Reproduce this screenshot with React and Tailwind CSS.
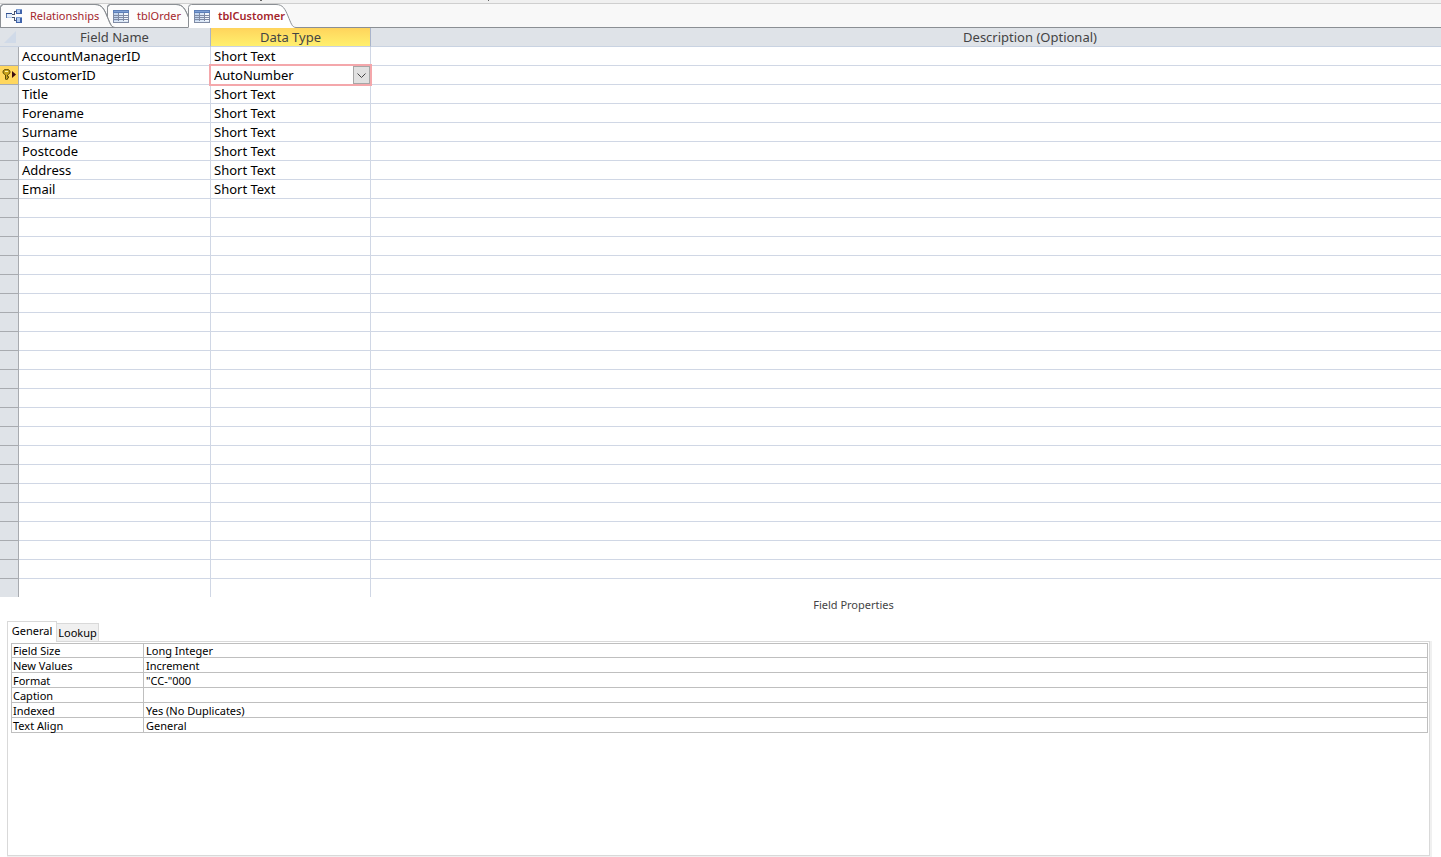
import React, { useState } from 'react';

const OBJECT_TABS = [
  { id: 'relationships', label: 'Relationships', icon: 'relations', width: 'w-[107px]', outline: 115, layer: 'z-[3]' },
  { id: 'order', label: 'tblOrder', icon: 'table', width: 'w-[81px]', outline: 89, layer: 'z-[2]' },
  { id: 'customer', label: 'tblCustomer', icon: 'table', width: 'w-[108px]', outline: 108, layer: 'z-[1]' },
];

const FIELDS = [
  { name: 'AccountManagerID', type: 'Short Text' },
  { name: 'CustomerID', type: 'AutoNumber', key: true },
  { name: 'Title', type: 'Short Text' },
  { name: 'Forename', type: 'Short Text' },
  { name: 'Surname', type: 'Short Text' },
  { name: 'Postcode', type: 'Short Text' },
  { name: 'Address', type: 'Short Text' },
  { name: 'Email', type: 'Short Text' },
];

const ROW_COUNT = 29;
const ROWS = Array.from({ length: ROW_COUNT }, (_, i) => FIELDS[i] ?? null);

const PROPERTIES = [
  ['Field Size', 'Long Integer'],
  ['New Values', 'Increment'],
  ['Format', '"CC-"000'],
  ['Caption', ''],
  ['Indexed', 'Yes (No Duplicates)'],
  ['Text Align', 'General'],
];

const DATA_TYPES = ['AutoNumber', 'Short Text', 'Long Text', 'Number', 'Date/Time', 'Currency', 'Yes/No'];

const TableIcon = () => (
  <svg width="16" height="13" viewBox="0 0 16 13" shapeRendering="crispEdges" className="shrink-0" aria-hidden>
    <rect width="16" height="13" fill="#7f8ba5" />
    <rect width="16" height="3" fill="#5c7fb9" />
    <rect x="1" y="1" width="14" height="1" fill="#7fa0d4" />
    {[3, 6, 8, 10].map((y, i) => (
      <g key={y}>
        <rect x="1" y={y} width="4" height={i === 0 ? 2 : 1} fill="#c3d5ee" />
        <rect x="6" y={y} width="4" height={i === 0 ? 2 : 1} fill="#dce8f7" />
        <rect x="11" y={y} width="4" height={i === 0 ? 2 : 1} fill="#f4f8fd" />
      </g>
    ))}
    <rect x="1" y="11" width="14" height="1" fill="#dce8f7" />
  </svg>
);

const RelationsIcon = () => (
  <svg width="16" height="14" viewBox="0 0 16 14" shapeRendering="crispEdges" className="shrink-0" aria-hidden>
    <path d="M5 5.5H8.500V2.500H10M5 8.500H8.500V11.500H10" stroke="#4a5570" fill="none" />
    <rect x="0" y="4" width="6" height="5" fill="#b9cdea" />
    <rect x="0" y="4" width="6" height="1" fill="#2f4f8f" />
    <rect x="0" y="5" width="1" height="4" fill="#5f7db0" />
    <rect x="1" y="5" width="5" height="3" fill="#e4edf9" />
    <rect x="10" y="0" width="6" height="5" fill="#3f63ab" />
    <rect x="10" y="0" width="6" height="1" fill="#7f9fd2" />
    <rect x="11" y="1" width="3" height="3" fill="#b5cbed" />
    <rect x="10" y="8" width="6" height="6" fill="#3f63ab" />
    <rect x="10" y="8" width="6" height="1" fill="#7f9fd2" />
    <rect x="11" y="9" width="3" height="4" fill="#b5cbed" />
  </svg>
);

const KeyIcon = () => (
  <svg width="17" height="14" viewBox="0 0 17 14" className="block" aria-hidden>
    <path
      d="M3 4C3 2 4.500 1.500 6.500 1.500S10 2 10 4 8.500 6 7.500 7V8.500H8.500V10H7.500V11L6.500 12 5.500 11V7C4.500 6 3 6 3 4Z"
      fill="#c9a41c"
      stroke="#5b4a08"
    />
    <rect x="5" y="3" width="3" height="1" fill="#fff0a0" />
    <path d="M12 3V10L16 6.500Z" fill="#3a0c10" />
  </svg>
);

/** Outline of a document tab: square on the left, slanted on the right */
const TabShape = ({ wide, active }) => {
  const outline = `M0.500 23.500V3.500Q0.500 0.500 3.500 0.500H${wide - 20}C${wide - 13} 0.500 ${wide - 11} 5 ${wide - 8} 12S${wide - 4} 23.500 ${wide} 23.500`;
  return (
    <svg width={wide} height="24" viewBox={`0 0 ${wide} 24`} className="absolute top-0 left-0" aria-hidden>
      <path d={`${outline}Z`} fill={active ? '#ffffff' : '#fcfcfc'} stroke={active ? '#ffffff' : '#8b8f94'} />
      <path d={outline} fill="none" stroke="#8b8f94" />
    </svg>
  );
};

const App = () => {
  const [activeTab, setActiveTab] = useState('customer');
  const [propTab, setPropTab] = useState('General');

  return (
    <div className="flex min-h-screen flex-col bg-white font-['Noto_Sans',sans-serif] text-black">
      <div className="h-1 shrink-0 border-b border-[#cfcfcf] bg-[#f0f0f0]">
        <svg width="490" height="1" viewBox="0 0 490 1" shapeRendering="crispEdges" className="block" aria-hidden>
          <path d="M260 0.500H262M488 0.500H489" stroke="#666666" />
        </svg>
      </div>

      <nav className="flex h-6 shrink-0 border-b border-[#8b8f94] bg-[#f8f8f8]" aria-label="Open objects">
        {OBJECT_TABS.map(({ id, label, icon, width, outline, layer }) => {
          const active = id === activeTab;
          return (
            <button
              key={id}
              type="button"
              onClick={() => setActiveTab(id)}
              className={`relative h-6 shrink-0 text-left ${width} ${active ? 'z-10' : layer}`}
            >
              <TabShape wide={outline} active={active} />
              <span className="relative flex items-center gap-2 pl-1.5">
                {icon === 'table' ? <TableIcon /> : <RelationsIcon />}
                <span
                  className={`text-[11px] leading-6 whitespace-nowrap text-[#a4262c] ${active ? 'font-semibold' : ''}`}
                >
                  {label}
                </span>
              </span>
            </button>
          );
        })}
      </nav>

      <table className="w-full table-fixed border-separate border-spacing-0 text-[13px] leading-[18px]">
        <colgroup>
          <col className="w-[19px]" />
          <col className="w-48" />
          <col className="w-40" />
          <col />
        </colgroup>
        <thead>
          <tr className="h-[19px] bg-[#dfe3e8] text-[#444444]">
            <th className="border-b border-[#c9d3e2] p-0" aria-label="Select all">
              <svg width="12" height="12" viewBox="0 0 12 12" className="ml-1 block" aria-hidden>
                <path d="M12 0V12H0Z" fill="#d0dae8" />
              </svg>
            </th>
            <th className="border-r border-b border-r-[#a9b4cb] border-b-[#c9d3e2] p-0 font-normal">Field Name</th>
            <th className="border-r border-b border-r-[#a9b4cb] border-b-[#c9d3e2] bg-linear-to-b from-[#ffd45c] to-[#fff06e] p-0 font-normal">
              Data Type
            </th>
            <th className="border-b border-[#c9d3e2] p-0 pl-62 font-normal">Description (Optional)</th>
          </tr>
        </thead>
        <tbody>
          {ROWS.map((field, i) => (
            <tr key={i} className="group h-[19px] last:h-[18px]">
              <td
                className={`border-r border-b border-[#a8abb0] p-0 group-last:border-b-0 ${field?.key ? 'bg-[#ffd75e]' : 'bg-[#dfe3e8]'}`}
              >
                {field?.key && <KeyIcon />}
              </td>
              <td className="border-r border-b border-[#d0d7e5] p-0 pl-[3px] group-last:border-b-0">{field?.name}</td>
              <td className="relative border-r border-b border-[#d0d7e5] p-0 pl-[3px] group-last:border-b-0">
                {field?.key ? (
                  <>
                    <span className="pointer-events-none absolute -inset-0.5 z-10 border-2 border-[#f4a7ab]" />
                    <select
                      defaultValue={field.type}
                      aria-label="Data type"
                      className="block h-[18px] w-full appearance-none leading-[18px] outline-none"
                    >
                      {DATA_TYPES.map((t) => (
                        <option key={t}>{t}</option>
                      ))}
                    </select>
                    <svg
                      width="17"
                      height="18"
                      viewBox="0 0 17 18"
                      className="pointer-events-none absolute top-0 right-0"
                      aria-hidden
                    >
                      <rect x="0.500" y="0.500" width="16" height="17" fill="#e1e1e1" stroke="#a6a6a6" />
                      <path d="M4.500 7.500L8.500 11.500 12.500 7.500" fill="none" stroke="#444444" />
                    </svg>
                  </>
                ) : (
                  field?.type
                )}
              </td>
              <td className="border-b border-[#d0d7e5] p-0 group-last:border-b-0" />
            </tr>
          ))}
        </tbody>
      </table>

      <section className="flex flex-1 flex-col pr-[11px] pb-px pl-[7px] text-[11px] leading-[14px]">
        <h2 className="pt-px pl-[270px] text-center text-[#444444]">Field Properties</h2>
        <div className="mt-[9px] flex items-end" role="tablist">
          {['General', 'Lookup'].map((name) => (
            <button
              key={name}
              type="button"
              role="tab"
              aria-selected={name === propTab}
              onClick={() => setPropTab(name)}
              className={
                name === propTab
                  ? 'relative z-10 -mb-px h-[21px] w-[50px] border border-b-0 border-[#d9d9d9] bg-white pb-0.5 text-center'
                  : 'h-[18px] w-[42px] border border-b-0 border-l-0 border-[#d9d9d9] bg-[#f0f0f0] text-center'
              }
            >
              {name}
            </button>
          ))}
        </div>
        <div className="flex-1 border border-[#d9d9d9] px-[3px] py-px shadow-[1px_1px_0_1px_#f0f0f0]">
          <div className="-mr-0.5">
            <table className="w-full table-fixed border-separate border-spacing-0 border-t border-l border-[#bfbfbf] leading-[13px]">
              <colgroup>
                <col className="w-[132px]" />
                <col />
              </colgroup>
              <tbody>
                {PROPERTIES.map(([name, value]) => (
                  <tr key={name} className="h-[15px] first:h-[14px]">
                    <th className="border-r border-b border-[#bfbfbf] p-0 pl-px text-left font-normal">{name}</th>
                    <td className="border-r border-b border-[#bfbfbf] p-0 pl-0.5">{value}</td>
                  </tr>
                ))}
              </tbody>
            </table>
          </div>
        </div>
      </section>
    </div>
  );
};

export default App;
